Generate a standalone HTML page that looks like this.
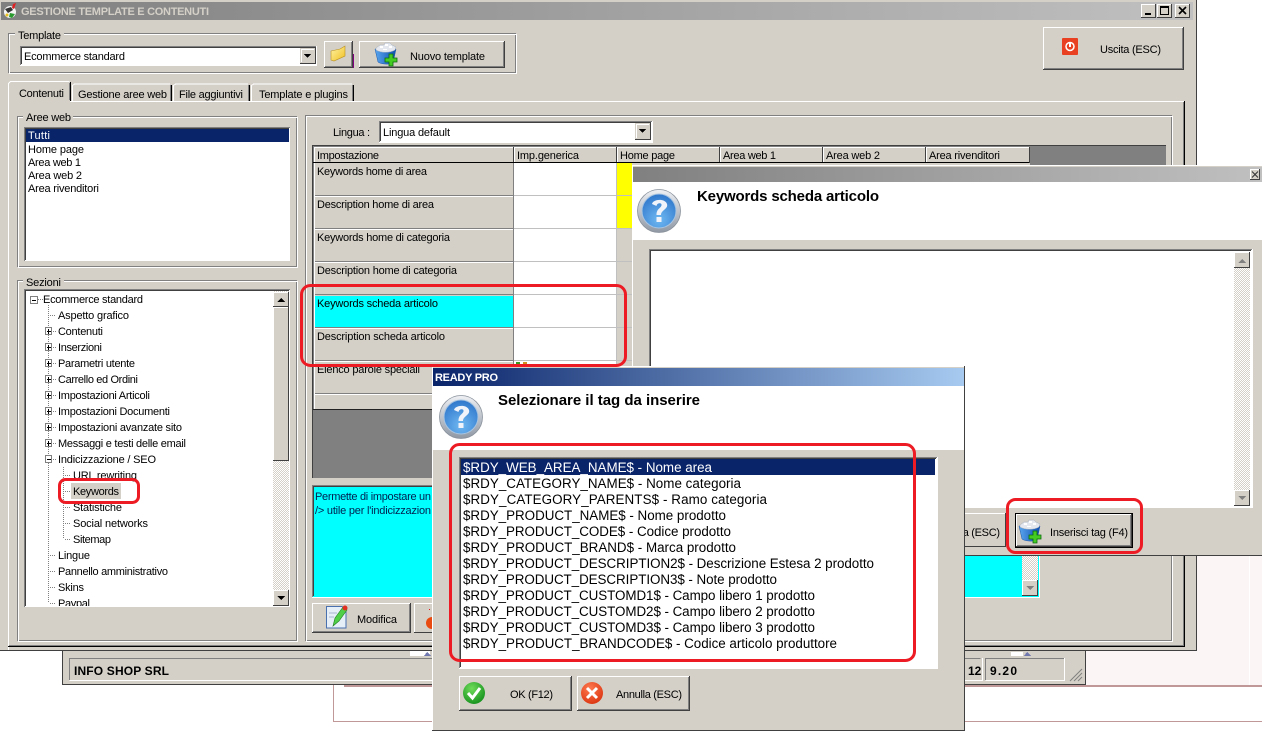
<!DOCTYPE html>
<html><head><meta charset="utf-8">
<style>
html,body{margin:0;padding:0;background:#fff;width:1262px;height:731px;overflow:hidden}
svg{display:block;shape-rendering:crispEdges}
text{font-family:"Liberation Sans",sans-serif;font-size:11px;fill:#000;shape-rendering:auto;white-space:pre}
.b{font-weight:bold}
.t{font-size:15px;font-weight:bold}
.l{font-size:13.4px}
.w{fill:none;stroke:#fff}
.g{fill:none;stroke:#808080}
.k{fill:none;stroke:#404040}
.n{fill:none;stroke:#000}
.s{fill:none;stroke:#c0c0c0}
.f{fill:#d4d0c8}
.d{fill:none;stroke:#808080;stroke-dasharray:1 1}
.r{fill:none;stroke:#ed1c24;stroke-width:3;shape-rendering:auto}
.i{shape-rendering:geometricPrecision}
</style></head><body>
<svg xmlns="http://www.w3.org/2000/svg" width="1262" height="731" viewBox="0 0 1262 731">
<defs>
<linearGradient id="gt" x1="0" x2="1" y1="0" y2="0"><stop offset="0" stop-color="#808080"/><stop offset="1" stop-color="#c0c0c0"/></linearGradient>
<linearGradient id="bt" x1="0" x2="1" y1="0" y2="0"><stop offset="0" stop-color="#0a246a"/><stop offset="1" stop-color="#a6caf0"/></linearGradient>
<pattern id="dith" width="2" height="2" patternUnits="userSpaceOnUse"><rect width="2" height="2" fill="#d4d0c8"/><rect width="1" height="1" fill="#fff"/><rect x="1" y="1" width="1" height="1" fill="#fff"/></pattern>
<linearGradient id="qo" x1="0" y1="0" x2="0" y2="1"><stop offset="0" stop-color="#eef0f4"/><stop offset="1" stop-color="#8f98a4"/></linearGradient>
<radialGradient id="qi" cx=".5" cy=".75" r=".8"><stop offset="0" stop-color="#6fb8f2"/><stop offset="1" stop-color="#2a72c8"/></radialGradient>
<linearGradient id="bx" x1="0" x2="1" y1="0" y2="0"><stop offset="0" stop-color="#5aa6ee"/><stop offset="1" stop-color="#0d4fb0"/></linearGradient>
<linearGradient id="fo" x1="0" x2="1" y1="0" y2="1"><stop offset="0" stop-color="#fff3a8"/><stop offset="1" stop-color="#f0c020"/></linearGradient>
<radialGradient id="ok" cx=".4" cy=".3" r=".8"><stop offset="0" stop-color="#6fdc5a"/><stop offset="1" stop-color="#0d8a18"/></radialGradient>
<radialGradient id="no" cx=".4" cy=".3" r=".8"><stop offset="0" stop-color="#ff7a50"/><stop offset="1" stop-color="#d8300c"/></radialGradient>
<g id="q" class="i">
<circle cx="22" cy="22" r="21.5" fill="url(#qo)" stroke="#8a929c" stroke-width=".8"/>
<circle cx="22" cy="22" r="17" fill="url(#qi)" stroke="#a8c4e0"/>
<path d="M15 15C16 10 28 9 30 15C31.500 20 24 21 24 26H19.500C19.500 19 25 19 24.500 15.500C24 13.500 20 14 19.500 17Z" fill="#f0f4fa"/>
<rect x="19.500" y="28" width="5" height="5" fill="#f0f4fa"/>
</g>
<g id="box" class="i">
<path d="M0 6L3 19C5 21 14 22 18 20L21 6Z" fill="url(#bx)" stroke="#1a56a8" stroke-width=".5"/>
<path d="M1 5L5 2L9 2L10 0L15 0L17 2L21 4L20 7C15 10 6 10 1 7Z" fill="#e4e8ee" stroke="#a8b0bc" stroke-width=".5"/>
<path d="M5 3h3v2h-3zM10 1h3v2h-3zM14 3h3v2h-3zM8 6h4v1h-4z" fill="#fff"/>
<path d="M14 11h4v4h4v4h-4v4h-4v-4h-4v-4h4z" fill="#44cc22" stroke="#0d6a10" stroke-width=".8"/>
</g>
</defs>

<!-- desktop behind -->
<rect x="1085" y="556" width="177" height="129" fill="#fbf5f5"/>
<rect x="1249" y="556" width="1" height="129" fill="#fff"/>
<rect x="344" y="685" width="918" height="2" fill="#c09898"/>
<path d="M333.500 651V721.500H1262" fill="none" stroke="#c09898"/>

<!-- status window -->
<rect x="62" y="651" width="1023" height="33" class="f"/>
<path class="k" d="M62.500 651V684.500H1085.500V651"/>
<path class="g" d="M69.500 680V658.500H980.500"/><path class="w" d="M69.500 680.500H982.500V658"/>
<path class="g" d="M985.500 680V658.500H1064.500"/><path class="w" d="M985.500 680.500H1064.500V658"/>
<text x="74" y="675" class="b" style="font-size:12px" textLength="95" lengthAdjust="spacing">INFO SHOP SRL</text>
<text x="968" y="675" class="b" style="font-size:12px">12</text>
<text x="990" y="675" class="b" style="font-size:12px" textLength="27">9.20</text>
<path class="g" d="M1070 681L1082 669M1074 681L1082 673M1078 681L1082 677" style="shape-rendering:auto"/>
<rect x="410" y="651" width="20" height="5" fill="#fff"/><rect x="1011" y="652" width="12" height="4" fill="#fff"/><path d="M1024 656l3-4 4 4z" fill="#7078b0"/>
<path d="M424 656l3-4 4 4z" fill="#7078b0"/>

<!-- main window -->
<rect x="0" y="0" width="1197" height="651" class="f"/>
<path class="k" d="M0 650.500H1196.500V0"/>
<rect x="1" y="2" width="1192" height="18" fill="url(#gt)"/>
<g class="i">
<circle cx="10" cy="12" r="6" fill="#f4f4f4"/><path d="M5 9l6-2 2 3-5 3z" fill="#333"/><path d="M10 13l5 1-3 4-3-1z" fill="#2a9a30"/><path d="M13 4l3-1-2 6-2-1z" fill="#e02020"/><circle cx="7" cy="15" r="1.500" fill="#e8c020"/>
</g>
<text x="21" y="15" class="b" style="fill:#d4d0c8" textLength="188" lengthAdjust="spacing">GESTIONE TEMPLATE E CONTENUTI</text>
<!-- caption buttons -->
<g>
<rect x="1141" y="4" width="15" height="14" class="f"/><path class="w" d="M1141.500 17V4.500H1156"/><path class="k" d="M1141 17.500H1155.500V4"/><rect x="1145" y="13" width="6" height="2"/>
<rect x="1157" y="4" width="15" height="14" class="f"/><path class="w" d="M1157.500 17V4.500H1172"/><path class="k" d="M1157 17.500H1171.500V4"/><rect x="1160.500" y="6.500" width="8" height="8" fill="none" stroke="#000"/><rect x="1160" y="6" width="9" height="2"/>
<rect x="1175" y="4" width="15" height="14" class="f"/><path class="w" d="M1175.500 17V4.500H1190"/><path class="k" d="M1175 17.500H1189.500V4"/><path d="M1179 7L1186 14M1186 7L1179 14" stroke="#000" stroke-width="1.600" style="shape-rendering:auto"/>
</g>

<!-- Template group -->
<rect x="8.500" y="33.500" width="507" height="39" class="g"/><rect x="9.500" y="34.500" width="507" height="39" class="w"/>
<rect x="15" y="32" width="49" height="6" class="f"/>
<text x="18" y="39" textLength="43">Template</text>
<rect x="20" y="46" width="297" height="19" fill="#fff"/>
<path class="g" d="M20.500 65V46.500H317"/><path class="k" d="M21.500 64V47.500H316"/>
<path class="w" d="M20 65.500H316.500V46"/>
<rect x="300" y="48" width="15" height="16" class="f"/><path class="w" d="M301.500 62V49.500H314"/><path class="k" d="M300 63.500H315.500V48"/>
<path d="M304 54h7l-3.500 4z"/>
<text x="24" y="60" textLength="101">Ecommerce standard</text>
<!-- folder btn -->
<path class="w" d="M324.500 67V41.500H353"/><path class="k" d="M324 67.500H352.500V41"/><path class="g" d="M325 66.500H351.500V42"/>
<rect x="353" y="54" width="1" height="14" fill="#800080"/>
<path class="i" d="M331 51L340 49L345 46V56L334 61L331 60Z" fill="url(#fo)" stroke="#b89020" stroke-width=".6"/>
<!-- nuovo -->
<path class="w" d="M359.500 68V41.500H505"/><path class="k" d="M359 67.500H504.500V41"/><path class="g" d="M360 66.500H503.500V42"/>
<use href="#box" x="375" y="43"/>
<text x="410" y="60" textLength="75">Nuovo template</text>
<!-- uscita -->
<path class="w" d="M1043.500 69V27.500H1184"/><path class="k" d="M1043 69.500H1183.500V27"/><path class="g" d="M1044 68.500H1182.500V28"/>
<rect x="1062" y="38" width="16" height="17" fill="#e84020" style="shape-rendering:auto" rx="1"/>
<circle cx="1070" cy="46.500" r="4" fill="none" stroke="#fff" stroke-width="1.500" class="i"/><rect x="1069" y="43" width="2" height="4" fill="#fff"/>
<text x="1100" y="53" textLength="61">Uscita (ESC)</text>

<!-- tabs / page -->
<path class="w" d="M8.500 650V101.500H1184"/>
<path class="n" d="M8 646.500H1184.500V101"/>
<path class="g" d="M9 645.500H1183.500V102"/>
<path class="w" d="M8.500 101V83.500L10.500 81.500H69.500"/><path class="n" d="M70.500 82V101"/><path class="g" d="M69.500 83V101"/>
<rect x="9" y="100" width="61" height="3" class="f"/>
<text x="19" y="97" textLength="45">Contenuti</text>
<path class="w" d="M72.500 101V85.500L74.500 84H170"/><path class="n" d="M171.500 85V101"/><path class="g" d="M170.500 85V101"/>
<text x="78" y="98" textLength="89">Gestione aree web</text>
<path class="w" d="M173.500 101V85.500L175.500 84H248"/><path class="n" d="M249.500 85V101"/><path class="g" d="M248.500 85V101"/>
<text x="179" y="98" textLength="64">File aggiuntivi</text>
<path class="w" d="M251.500 101V85.500L253.500 84H352"/><path class="n" d="M353.500 85V101"/><path class="g" d="M352.500 85V101"/>
<text x="259" y="98" textLength="89">Template e plugins</text>

<!-- Aree web -->
<rect x="17.500" y="116.500" width="279" height="150" class="g"/><rect x="18.500" y="117.500" width="279" height="150" class="w"/>
<rect x="23" y="114" width="50" height="6" class="f"/>
<text x="26" y="121" textLength="45">Aree web</text>
<rect x="24" y="127" width="266" height="134" fill="#fff"/>
<path class="g" d="M24.500 261V127.500H290"/><path class="k" d="M25.500 260V128.500H289"/>
<rect x="26" y="129" width="263" height="13" fill="#0a246a"/>
<text x="28" y="139" style="fill:#fff" textLength="22">Tutti</text>
<text x="28" y="153" textLength="56">Home page</text>
<text x="28" y="166" textLength="53">Area web 1</text>
<text x="28" y="179" textLength="54">Area web 2</text>
<text x="28" y="192" textLength="71">Area rivenditori</text>

<!-- Sezioni -->
<rect x="17.500" y="280.500" width="279" height="360" class="g"/><rect x="18.500" y="281.500" width="279" height="360" class="w"/>
<rect x="23" y="278" width="41" height="6" class="f"/>
<text x="26" y="286" textLength="35">Sezioni</text>
<rect x="24" y="289" width="266" height="318" fill="#fff"/>
<path class="g" d="M24.500 607V289.500H290"/><path class="k" d="M25.500 606V290.500H289"/>
<svg x="26" y="291" width="247" height="315" viewBox="26 291 247 315" overflow="hidden">
<path class="d" d="M48.500 305V603M63.500 467V539M38 299.500H43M50 315.500H56M53 331.500H56M53 347.500H56M53 363.500H56M53 379.500H56M53 395.500H56M53 411.500H56M53 427.500H56M53 443.500H56M53 459.500H56M65 475.500H71M65 491.500H71M65 507.500H71M65 523.500H71M65 539.500H71M50 555.500H56M50 571.500H56M50 587.500H56M50 603.500H56"/>
<g>
<rect x="30.500" y="296.500" width="7" height="7" fill="#fff" stroke="#808080"/><rect x="32" y="300" width="4" height="1"/>
<g id="tp"><rect x="45.500" y="327.500" width="6" height="7" fill="#fff" stroke="#808080"/><rect x="47" y="331" width="4" height="1"/><rect x="48" y="329" width="1" height="5"/></g>
<g><rect x="45.500" y="343.500" width="6" height="7" fill="#fff" stroke="#808080"/><rect x="47" y="347" width="4" height="1"/><rect x="48" y="345" width="1" height="5"/></g>
<g><rect x="45.500" y="359.500" width="6" height="7" fill="#fff" stroke="#808080"/><rect x="47" y="363" width="4" height="1"/><rect x="48" y="361" width="1" height="5"/></g>
<g><rect x="45.500" y="375.500" width="6" height="7" fill="#fff" stroke="#808080"/><rect x="47" y="379" width="4" height="1"/><rect x="48" y="377" width="1" height="5"/></g>
<g><rect x="45.500" y="391.500" width="6" height="7" fill="#fff" stroke="#808080"/><rect x="47" y="395" width="4" height="1"/><rect x="48" y="393" width="1" height="5"/></g>
<g><rect x="45.500" y="407.500" width="6" height="7" fill="#fff" stroke="#808080"/><rect x="47" y="411" width="4" height="1"/><rect x="48" y="409" width="1" height="5"/></g>
<g><rect x="45.500" y="423.500" width="6" height="7" fill="#fff" stroke="#808080"/><rect x="47" y="427" width="4" height="1"/><rect x="48" y="425" width="1" height="5"/></g>
<g><rect x="45.500" y="439.500" width="6" height="7" fill="#fff" stroke="#808080"/><rect x="47" y="443" width="4" height="1"/><rect x="48" y="441" width="1" height="5"/></g>
<g><rect x="45.500" y="455.500" width="6" height="7" fill="#fff" stroke="#808080"/><rect x="47" y="459" width="4" height="1"/></g>
</g>
<rect x="71" y="483" width="50" height="16" class="f"/>
<text x="43" y="303" textLength="100">Ecommerce standard</text>
<text x="58" y="319" textLength="71">Aspetto grafico</text>
<text x="58" y="335" textLength="45">Contenuti</text>
<text x="58" y="351" textLength="44">Inserzioni</text>
<text x="58" y="367" textLength="77">Parametri utente</text>
<text x="58" y="383" textLength="80">Carrello ed Ordini</text>
<text x="58" y="399" textLength="92">Impostazioni Articoli</text>
<text x="58" y="415" textLength="112">Impostazioni Documenti</text>
<text x="58" y="431" textLength="124">Impostazioni avanzate sito</text>
<text x="58" y="447" textLength="128">Messaggi e testi delle email</text>
<text x="58" y="463" textLength="98">Indicizzazione / SEO</text>
<text x="73" y="479" textLength="64">URL rewriting</text>
<text x="73" y="495" textLength="46">Keywords</text>
<text x="73" y="511" textLength="49">Statistiche</text>
<text x="73" y="527" textLength="75">Social networks</text>
<text x="73" y="543" textLength="38">Sitemap</text>
<text x="58" y="559" textLength="32">Lingue</text>
<text x="58" y="575" textLength="110">Pannello amministrativo</text>
<text x="58" y="591" textLength="26">Skins</text>
<text x="58" y="607" textLength="32">Paypal</text>
</svg>
<!-- tree scrollbar -->
<rect x="273" y="291" width="16" height="315" fill="url(#dith)"/>
<rect x="273" y="292" width="16" height="15" class="f"/><path class="w" d="M273.500 306V292.500H289"/><path class="k" d="M273 306.500H288.500V292"/><path d="M277 302h8l-4-4z"/>
<rect x="273" y="307" width="16" height="154" class="f"/><path class="w" d="M273.500 460V307.500H289"/><path class="k" d="M273 460.500H288.500V307"/>
<rect x="273" y="590" width="16" height="16" class="f"/><path class="w" d="M273.500 605V590.500H289"/><path class="k" d="M273 605.500H288.500V590"/><path d="M277 596h8l-4 4z"/>

<!-- right panel -->
<rect x="305.500" y="115.500" width="866" height="525" class="g"/><rect x="306.500" y="116.500" width="866" height="525" class="w"/>
<text x="333" y="136" textLength="37">Lingua :</text>
<rect x="379" y="121" width="273" height="21" fill="#fff"/>
<path class="g" d="M379.500 142V121.500H652"/><path class="k" d="M380.500 141V122.500H651"/><path class="w" d="M379 142.500H652.500V121"/>
<rect x="635" y="123" width="15" height="17" class="f"/><path class="w" d="M636.500 138V124.500H649"/><path class="k" d="M635 139.500H650.500V123"/><path d="M639 129h7l-3.500 4z"/>
<text x="383" y="136" textLength="67">Lingua default</text>

<!-- grid -->
<rect x="312" y="145" width="854" height="333" fill="#808080"/>
<path class="k" d="M312.500 478V145.500H1166"/>
<rect x="314" y="147" width="716" height="16" class="f"/>
<rect x="313" y="162" width="717" height="1"/>
<path class="w" d="M314.500 162V147.500H1029"/>
<path d="M513.500 147V162M616.500 147V162M719.500 147V162M822.500 147V162M925.500 147V162" class="k"/>
<path d="M514.500 147V162M617.500 147V162M720.500 147V162M823.500 147V162M926.500 147V162" class="w"/>
<path class="k" d="M1029.500 147V163"/>
<text x="317" y="159" textLength="62">Impostazione</text>
<text x="517" y="159" textLength="62">Imp.generica</text>
<text x="620" y="159" textLength="55">Home page</text>
<text x="723" y="159" textLength="53">Area web 1</text>
<text x="826" y="159" textLength="54">Area web 2</text>
<text x="929" y="159" textLength="71">Area rivenditori</text>
<rect x="314" y="163" width="716" height="247" class="f"/>
<rect x="514" y="163" width="103" height="231" fill="#fff"/>
<rect x="617" y="163" width="15" height="32" fill="#ff0"/><rect x="617" y="196" width="15" height="32" fill="#ff0"/>
<rect x="314" y="296" width="199" height="31" fill="#0ff"/>
<path class="s" d="M314 195.500H632M314 228.500H632M314 261.500H632M314 294.500H632M314 327.500H632M314 360.500H632M314 393.500H632"/>
<path class="g" d="M314 195.500H513M314 228.500H513M314 261.500H513M314 294.500H513M314 327.500H513M314 360.500H513M314 393.500H513"/>
<path class="w" d="M314.500 163V410M314 196.500H513M314 229.500H513M314 262.500H513M314 328.500H513M314 361.500H513M314 394.500H513"/>
<path class="g" d="M513.500 163V394"/>
<path class="s" d="M616.500 163V394"/>
<rect x="313" y="409" width="717" height="1" fill="#222"/>
<rect x="516" y="362" width="4" height="4" fill="#3a9a20"/><rect x="523" y="362" width="4" height="4" fill="#d09020"/>
<text x="317" y="175" textLength="110">Keywords home di area</text>
<text x="317" y="208" textLength="117">Description home di area</text>
<text x="317" y="241" textLength="133">Keywords home di categoria</text>
<text x="317" y="274" textLength="140">Description home di categoria</text>
<text x="317" y="307" textLength="121">Keywords scheda articolo</text>
<text x="317" y="340" textLength="128">Description scheda articolo</text>
<text x="317" y="373" textLength="103">Elenco parole speciali</text>

<!-- help panel -->
<rect x="312" y="485" width="727" height="112" fill="#0ff"/>
<path class="g" d="M312.500 597V485.500H1039"/><path class="k" d="M313.500 596V486.500H1038"/><path class="w" d="M312 597.500H1039.500V485"/>
<text x="315" y="500" style="fill:#002050" textLength="116">Permette di impostare un</text>
<text x="315" y="514" style="fill:#002050" textLength="116">/&gt; utile per l'indicizzazion</text>
<rect x="1022" y="487" width="16" height="109" fill="url(#dith)"/>
<rect x="1022" y="580" width="16" height="16" class="f"/><path class="w" d="M1022.500 595V580.500H1038"/><path class="k" d="M1022 595.500H1037.500V580"/><path d="M1026 586h8l-4 4z" fill="#808080"/>

<!-- buttons bottom -->
<path class="w" d="M312.500 633V603.500H411"/><path class="k" d="M312 632.500H410.500V603"/><path class="g" d="M313 631.500H409.500V604"/>
<g class="i">
<path d="M326.500 606.500H342L346 610V628H326.500Z" fill="#e6eef8" stroke="#4a70b0"/>
<path d="M329 613h8M329 617h5" stroke="#a8b8d0"/>
<path d="M333 626L335 618L343 607L347 610L339 621Z" fill="#50d048" stroke="#208020" stroke-width=".6"/>
<circle cx="345" cy="608" r="2.500" fill="#e03020"/>
</g>
<text x="357" y="623" textLength="40">Modifica</text>
<path class="w" d="M414.500 633V603.500H440"/><path class="k" d="M414 632.500H440"/>
<circle cx="432" cy="623" r="6" fill="#e84a10" class="i"/><rect x="429" y="609" width="1" height="1" fill="#e02020"/>

<!-- Dialog 1 -->
<rect x="632" y="165" width="630" height="391" class="f"/>
<path class="w" d="M632.500 556V165.500H1262"/>
<path class="k" d="M632 555.500H1262"/>
<rect x="633" y="167" width="629" height="15" fill="url(#gt)"/>
<rect x="1250" y="169" width="10" height="11" class="f"/><path class="w" d="M1250.500 179V169.500H1260"/><path class="k" d="M1250 179.500H1259.500V169"/><path d="M1252 171.500L1258 177.500M1258 171.500L1252 177.500" stroke="#333" style="shape-rendering:auto"/>
<rect x="633" y="182" width="629" height="58" fill="#fff"/>
<use href="#q" x="637" y="189"/>
<text x="697" y="201" class="t" textLength="182">Keywords scheda articolo</text>
<rect x="649" y="249" width="603" height="258" fill="#fff"/>
<path class="g" d="M649.500 507V249.500H1252"/><path class="k" d="M650.500 506V250.500H1251"/><path class="w" d="M649 507.500H1252.500V249"/>
<rect x="1234" y="252" width="16" height="254" fill="url(#dith)"/>
<rect x="1234" y="252" width="16" height="16" class="f"/><path class="w" d="M1234.500 267V252.500H1250"/><path class="k" d="M1234 267.500H1249.500V252"/><path d="M1238 263h8l-4-4z" fill="#808080"/>
<rect x="1234" y="490" width="16" height="16" class="f"/><path class="w" d="M1234.500 505V490.500H1250"/><path class="k" d="M1234 505.500H1249.500V490"/><path d="M1238 496h8l-4 4z" fill="#808080"/>
<path class="w" d="M892.500 547V513.500H1005"/><path class="k" d="M892 546.500H1005.500V513"/>
<text x="934" y="536" textLength="66">Annulla (ESC)</text>
<rect x="1015.500" y="513.500" width="117" height="34" fill="#d4d0c8" stroke="#000"/>
<path class="w" d="M1016.500 546V514.500H1131"/><path class="k" d="M1016 546.500H1131.500V514"/><path class="g" d="M1017 545.500H1130.500V515"/>
<use href="#box" x="1019" y="520"/>
<text x="1050" y="536" textLength="78">Inserisci tag (F4)</text>

<!-- Dialog 2 -->
<rect x="432" y="366" width="533" height="365" class="f"/>
<path class="w" d="M432.500 731V366.500H965"/>
<path class="k" d="M432 730.500H964.500V366"/>
<rect x="433" y="368" width="531" height="18" fill="url(#bt)"/>
<text x="435" y="381" class="b" style="fill:#fff" textLength="63">READY PRO</text>
<rect x="433" y="386" width="531" height="64" fill="#fff"/>
<use href="#q" x="439" y="395"/>
<text x="498" y="405" class="t" textLength="202">Selezionare il tag da inserire</text>
<rect x="459" y="457" width="478" height="211" fill="#fff"/>
<path class="g" d="M459.500 668V457.500H937"/><path class="k" d="M460.500 667V458.500H936"/><path class="w" d="M459 668.500H937.500V457"/>
<rect x="461" y="459" width="474" height="16" fill="#0a246a"/>
<g class="l">
<text class="l" x="463" y="472" style="fill:#fff" textLength="249">$RDY_WEB_AREA_NAME$ - Nome area</text>
<text class="l" x="463" y="488" textLength="278">$RDY_CATEGORY_NAME$ - Nome categoria</text>
<text class="l" x="463" y="504" textLength="304">$RDY_CATEGORY_PARENTS$ - Ramo categoria</text>
<text class="l" x="463" y="520" textLength="263">$RDY_PRODUCT_NAME$ - Nome prodotto</text>
<text class="l" x="463" y="536" textLength="268">$RDY_PRODUCT_CODE$ - Codice prodotto</text>
<text class="l" x="463" y="552" textLength="273">$RDY_PRODUCT_BRAND$ - Marca prodotto</text>
<text class="l" x="463" y="568" textLength="411">$RDY_PRODUCT_DESCRIPTION2$ - Descrizione Estesa 2 prodotto</text>
<text class="l" x="463" y="584" textLength="314">$RDY_PRODUCT_DESCRIPTION3$ - Note prodotto</text>
<text class="l" x="463" y="600" textLength="352">$RDY_PRODUCT_CUSTOMD1$ - Campo libero 1 prodotto</text>
<text class="l" x="463" y="616" textLength="352">$RDY_PRODUCT_CUSTOMD2$ - Campo libero 2 prodotto</text>
<text class="l" x="463" y="632" textLength="352">$RDY_PRODUCT_CUSTOMD3$ - Campo libero 3 prodotto</text>
<text class="l" x="463" y="648" textLength="374">$RDY_PRODUCT_BRANDCODE$ - Codice articolo produttore</text>
</g>
<path class="w" d="M459.500 711V676.500H572"/><path class="k" d="M459 710.500H571.500V676"/><path class="g" d="M460 709.500H570.500V677"/>
<g class="i"><circle cx="474" cy="693" r="11" fill="url(#ok)"/><path d="M468 693L472.500 698L480 688" fill="none" stroke="#fff" stroke-width="3"/></g>
<text x="510" y="698" textLength="43">OK (F12)</text>
<path class="w" d="M577.500 711V676.500H690"/><path class="k" d="M577 710.500H689.500V676"/><path class="g" d="M578 709.500H688.500V677"/>
<g class="i"><circle cx="592" cy="693" r="11" fill="url(#no)"/><path d="M587 688L597 698M597 688L587 698" fill="none" stroke="#fff" stroke-width="3"/></g>
<text x="616" y="698" textLength="66">Annulla (ESC)</text>

<!-- red annotation boxes -->
<rect class="r" x="301.500" y="285.500" width="324" height="80" rx="9"/>
<rect class="r" x="59.500" y="479.500" width="79" height="23" rx="6"/>
<rect class="r" x="450.500" y="444.500" width="464" height="216" rx="9"/>
<rect class="r" x="1007.500" y="499.500" width="134" height="53" rx="8"/>
</svg>
</body></html>
